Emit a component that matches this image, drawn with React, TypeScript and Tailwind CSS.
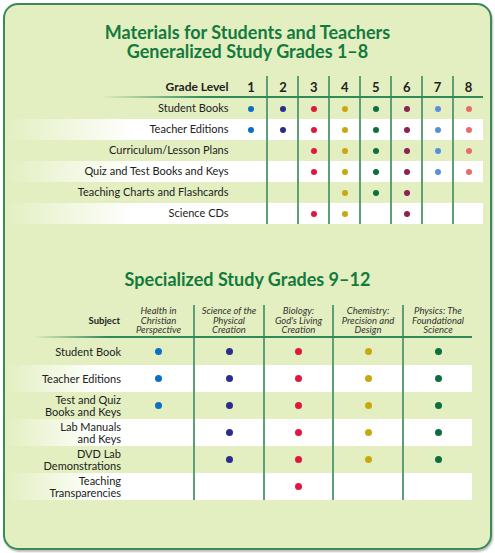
const gradeDots = [
  'bg-[#0b6fc4]',
  'bg-[#2b2d8c]',
  'bg-[#e2173f]',
  'bg-[#c9a80f]',
  'bg-[#0d6e3e]',
  'bg-[#8c2152]',
  'bg-[#5a8fdb]',
  'bg-[#ea6b6b]',
];

// grades each material is offered in (1-8)
const materials = [
  { name: 'Student Books', grades: [1, 2, 3, 4, 5, 6, 7, 8] },
  { name: 'Teacher Editions', grades: [1, 2, 3, 4, 5, 6, 7, 8] },
  { name: 'Curriculum/Lesson Plans', grades: [3, 4, 5, 6, 7, 8] },
  { name: 'Quiz and Test Books and Keys', grades: [3, 4, 5, 6, 7, 8] },
  { name: 'Teaching Charts and Flashcards', grades: [4, 5, 6] },
  { name: 'Science CDs', grades: [3, 4, 6] },
];

const subjects = [
  { lines: ['Health in', 'Christian', 'Perspective'], dot: 'bg-[#0b6fc4]', w: 'w-[69px]' },
  { lines: ['Science of the', 'Physical', 'Creation'], dot: 'bg-[#2b2d8c]', w: 'w-[70px]' },
  { lines: ['Biology:', "God's Living", 'Creation'], dot: 'bg-[#e2173f]', w: 'w-[69px]' },
  { lines: ['Chemistry:', 'Precision and', 'Design'], dot: 'bg-[#c9a80f]', w: 'w-[70px]' },
  { lines: ['Physics: The', 'Foundational', 'Science'], dot: 'bg-[#0d6e3e]', w: 'w-[70px]' },
];

const specialized = [
  { lines: ['Student Book'], cols: [1, 2, 3, 4, 5] },
  { lines: ['Teacher Editions'], cols: [1, 2, 3, 4, 5] },
  { lines: ['Test and Quiz', 'Books and Keys'], cols: [1, 2, 3, 4, 5] },
  { lines: ['Lab Manuals', 'and Keys'], cols: [2, 3, 4, 5] },
  { lines: ['DVD Lab', 'Demonstrations'], cols: [2, 3, 4, 5] },
  { lines: ['Teaching', 'Transparencies'], cols: [3] },
];

const line = 'border-l-2 border-[#5e9f78]';

export default function App() {
  return (
    <div className="w-[495px] h-[553px] bg-white font-['Lato','Liberation_Sans',sans-serif]">
      <div className="m-[3px] w-[489px] h-[547px] rounded-[15px] border-2 border-[#3a8a5b] bg-[#e3efc0] shadow-[1px_2px_2px_rgba(0,0,0,0.25)] overflow-hidden">
        <h1 className="pt-[18px] text-center text-[18px] leading-[19px] font-bold text-[#137a3e]">
          Materials for Students and Teachers
          <br />
          Generalized Study Grades 1–8
        </h1>

        {/* Grades 1-8 table */}
        <div className="mt-[15px] w-[478px] text-[#222]">
          <div className="flex h-[20px]">
            <div className="w-[231px] pr-[7px] text-right text-[12px] font-bold leading-[22px]">Grade Level</div>
            {gradeDots.map((_, i) => (
              <div
                key={i}
                className={`w-[31px] text-center text-[13px] font-bold leading-[22px] ${i > 0 ? line : ''}`}
              >
                {i + 1}
              </div>
            ))}
          </div>
          <div className="h-[2px] bg-linear-to-r from-transparent from-[20%] to-[#2f8a55] to-[42%]" />
          {materials.map((m, r) => (
            <div
              key={m.name}
              className={`flex h-[21px] items-center ${r % 2 === 1 ? 'bg-linear-to-r from-transparent to-white to-[27%]' : ''}`}
            >
              <div className="w-[231px] pr-[7px] text-right text-[11px]">{m.name}</div>
              {gradeDots.map((dot, i) => (
                <div key={i} className={`flex h-full w-[31px] items-center justify-center ${i > 0 ? line : ''}`}>
                  {m.grades.includes(i + 1) && <span className={`block h-[6px] w-[6px] rounded-full ${dot}`} />}
                </div>
              ))}
            </div>
          ))}
        </div>

        <h2 className="mt-[46px] text-center text-[18px] leading-[18px] font-bold text-[#137a3e]">
          Specialized Study Grades 9–12
        </h2>

        {/* Grades 9-12 table */}
        <div className="mt-[17px] w-[467px] text-[#222]">
          <div className="flex h-[31px]">
            <div className="flex w-[119px] items-center justify-end pr-[4px] pt-[2px] text-[9.5px] font-bold">Subject</div>
            {subjects.map((s, i) => (
              <div
                key={i}
                className={`flex ${s.w} flex-col items-center justify-center text-center text-[9.5px] italic leading-[9.5px] text-[#333] ${i > 0 ? line : ''}`}
              >
                {s.lines.map((l) => (
                  <span key={l}>{l}</span>
                ))}
              </div>
            ))}
          </div>
          <div className="h-[2px] bg-linear-to-r from-transparent from-[6%] to-[#2f8a55] to-[22%]" />
          {specialized.map((row, r) => (
            <div
              key={r}
              className={`flex h-[27px] items-center ${r % 2 === 1 ? 'bg-linear-to-r from-transparent to-white to-[20%]' : ''}`}
            >
              <div className="w-[119px] pr-[3px] text-right text-[11px] leading-[12px]">
                {row.lines.map((l) => (
                  <div key={l}>{l}</div>
                ))}
              </div>
              {subjects.map((s, i) => (
                <div key={i} className={`flex h-full ${s.w} items-center justify-center ${i > 0 ? line : ''}`}>
                  {row.cols.includes(i + 1) && <span className={`block h-[7px] w-[7px] rounded-full ${s.dot}`} />}
                </div>
              ))}
            </div>
          ))}
        </div>
      </div>
    </div>
  );
}
